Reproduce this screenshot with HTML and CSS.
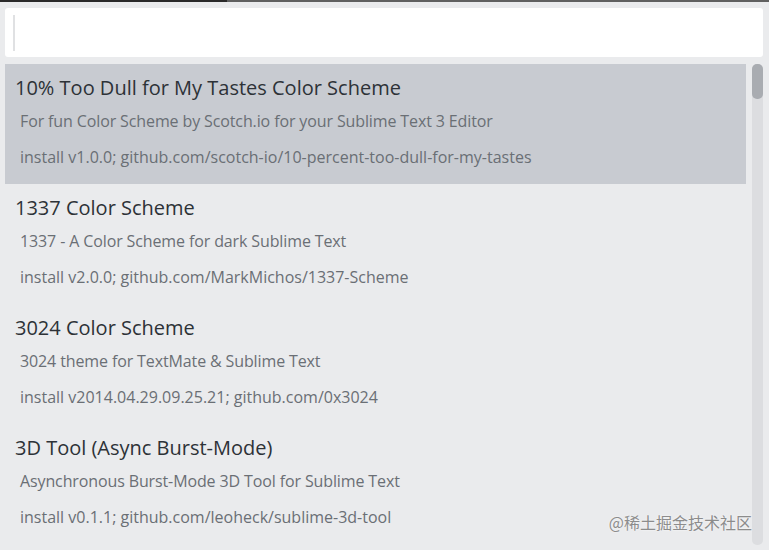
FILE: index.html
```html
<!DOCTYPE html>
<html lang="en">
<head>
<meta charset="utf-8">
<title>Install Package</title>
<link rel="stylesheet" href="styles.css">
</head>
<body>
<div class="topbar"><div class="topbar-active"></div><div class="topbar-rest"></div></div>
<div class="panel">
  <div class="search"><span class="caret"></span></div>
  <div class="results">
    <ul class="list">
      <li class="item selected">
        <div class="title">10% Too Dull for My Tastes Color Scheme</div>
        <div class="line desc">For fun Color Scheme by Scotch.io for your Sublime Text 3 Editor</div>
        <div class="line">install v1.0.0; github.com/scotch-io/10-percent-too-dull-for-my-tastes</div>
      </li>
      <li class="item">
        <div class="title">1337 Color Scheme</div>
        <div class="line desc">1337 - A Color Scheme for dark Sublime Text</div>
        <div class="line">install v2.0.0; github.com/MarkMichos/1337-Scheme</div>
      </li>
      <li class="item">
        <div class="title">3024 Color Scheme</div>
        <div class="line desc">3024 theme for TextMate &amp; Sublime Text</div>
        <div class="line">install v2014.04.29.09.25.21; github.com/0x3024</div>
      </li>
      <li class="item">
        <div class="title">3D Tool (Async Burst-Mode)</div>
        <div class="line desc">Asynchronous Burst-Mode 3D Tool for Sublime Text</div>
        <div class="line">install v0.1.1; github.com/leoheck/sublime-3d-tool</div>
      </li>
    </ul>
    <div class="scrollbar"><div class="thumb"></div></div>
  </div>
</div>
<div class="watermark">@稀土掘金技术社区</div>
</body>
</html>
```
FILE: styles.css
```css
html, body {
  margin: 0;
  padding: 0;
  height: 100%;
  overflow: hidden;
}
body {
  background: #eaebed;
  font-family: "Open Sans", "Noto Sans", sans-serif;
  position: relative;
}
.topbar {
  display: flex;
  height: 2px;
}
.topbar-active {
  width: 227px;
  background: #2a2a2a;
}
.topbar-rest {
  flex: 1;
  background: #606060;
}
.panel {
  padding: 6px 6px 0 5px;
}
.search {
  height: 49px;
  background: #ffffff;
  border-radius: 3px;
  display: flex;
  align-items: center;
  padding-left: 8px;
}
.caret {
  display: block;
  width: 2px;
  height: 36px;
  background: #e0e1e3;
}
.results {
  display: flex;
  gap: 6px;
  margin-top: 7px;
}
.list {
  list-style: none;
  margin: 0;
  padding: 0;
  flex: 1;
}
.item {
  height: 120px;
  box-sizing: border-box;
  padding: 10px 0 0 10px;
}
.item.selected {
  background: #c8cbd1;
}
.title {
  font-size: 20px;
  line-height: 28px;
  margin-bottom: 1px;
  color: #2d3237;
}
.line {
  font-size: 16px;
  line-height: 36px;
  color: #6a6f75;
  padding-left: 5px;
}
.desc {
  letter-spacing: -0.12px;
}
.scrollbar {
  width: 11px;
  height: 481px;
  background: #dcdde0;
  border-radius: 5px;
}
.thumb {
  height: 35px;
  background: #a9acb1;
  border-radius: 5px;
}
.watermark {
  position: absolute;
  right: 17px;
  top: 512px;
  font-family: "Noto Sans CJK SC", sans-serif;
  font-size: 16px;
  line-height: 20px;
  color: #8c8c8c;
  text-shadow: 0 0 2px #ffffff;
}
```
